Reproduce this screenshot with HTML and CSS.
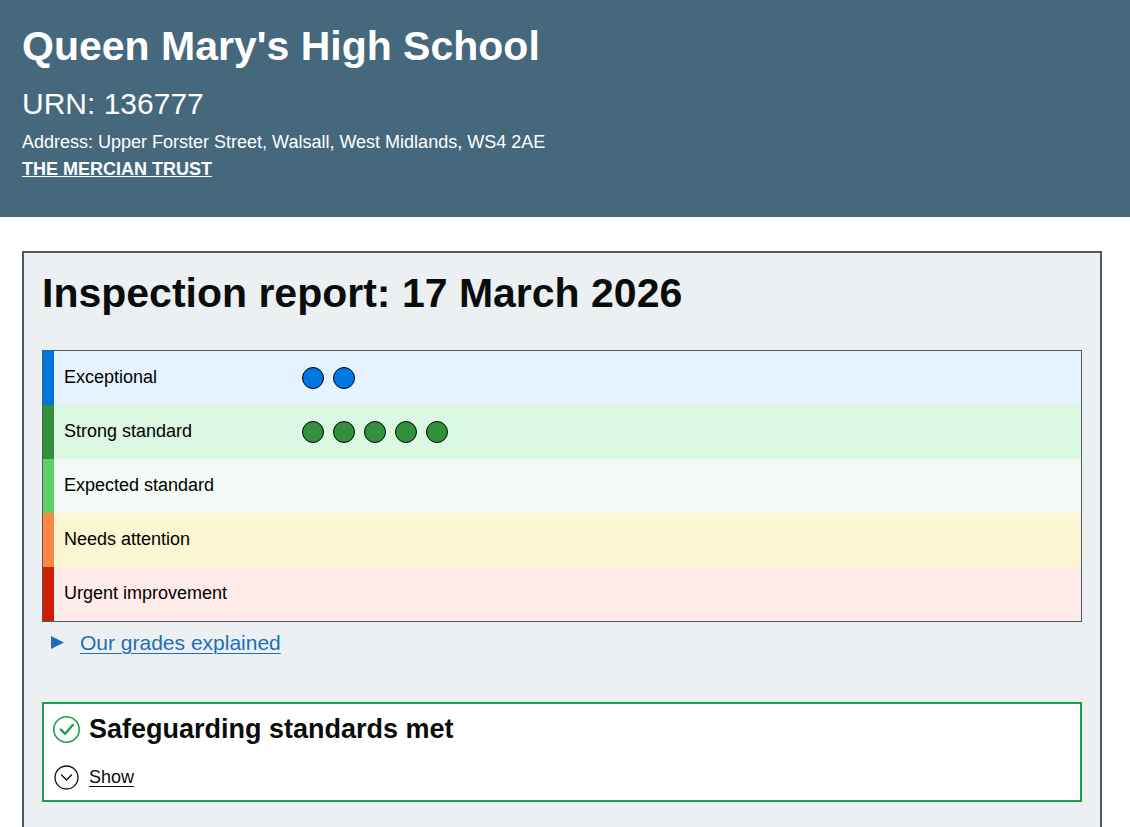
FILE: index.html
```html
<!DOCTYPE html>
<html lang="en">
<head>
    <meta charset="utf-8">
    <title>Queen Mary's High School</title>
    <link rel="stylesheet" href="styles.css">
</head>
<body>
    <header class="provider">
        <h1>Queen Mary's High School</h1>
        <p class="urn">URN: 136777</p>
        <p class="address">Address: Upper Forster Street, Walsall, West Midlands, WS4 2AE</p>
        <a class="trust" href="#trust">THE MERCIAN TRUST</a>
    </header>

    <main class="report">
        <h2>Inspection report: 17 March 2026</h2>

        <ul class="grades">
            <li class="grade exceptional">
                <span class="grade-name">Exceptional</span>
                <span class="dots"><i class="dot"></i><i class="dot"></i></span>
            </li>
            <li class="grade strong">
                <span class="grade-name">Strong standard</span>
                <span class="dots"><i class="dot"></i><i class="dot"></i><i class="dot"></i><i class="dot"></i><i class="dot"></i></span>
            </li>
            <li class="grade expected"><span class="grade-name">Expected standard</span></li>
            <li class="grade attention"><span class="grade-name">Needs attention</span></li>
            <li class="grade urgent"><span class="grade-name">Urgent improvement</span></li>
        </ul>

        <details class="explained">
            <summary>
                <svg class="arrow" viewBox="0 0 13 14" aria-hidden="true"><path d="M0 0L13 6.5L0 13Z"/></svg>
                <span>Our grades explained</span>
            </summary>
            <p>Each area is given one of five grades.</p>
        </details>

        <section class="safeguarding">
            <div class="safeguarding-title">
                <svg class="icon tick" viewBox="0 0 28 28" aria-hidden="true">
                    <circle cx="14.5" cy="14.5" r="12.7"/>
                    <path class="tick-mark" d="M8.8 14.6L13.2 18.8L20.8 10"/>
                </svg>
                <h3>Safeguarding standards met</h3>
            </div>
            <button class="toggle" type="button">
                <svg class="icon" viewBox="0 0 28 28" aria-hidden="true">
                    <circle cx="14.5" cy="14.5" r="11.5"/>
                    <path d="M9.5 12L14.5 17L19.5 12"/>
                </svg>
                <span>Show</span>
            </button>
        </section>
    </main>
</body>
</html>
```

FILE: styles.css
```css
* {
    margin: 0;
    padding: 0;
    box-sizing: border-box;
}

body {
    font-family: "Liberation Sans", Arial, sans-serif;
    font-size: 18px;
    line-height: 27px;
    color: #0b0c0c;
    background: #fff;
}

.provider {
    background: #45687d;
    color: #fff;
    padding: 21px 22px 34px;
}

h1,
h2 {
    font-size: 41px;
    line-height: 50px;
}

.urn {
    font-size: 30px;
    line-height: 38px;
    margin: 14px 0 6px;
}

.trust {
    color: #fff;
    font-weight: bold;
    text-decoration-thickness: 1px;
}

.report {
    margin: 34px 28px 0 22px;
    padding: 15px 18px 40px;
    background: #ecf0f3;
    border: 2px solid #505a5f;
}

.grades {
    list-style: none;
    margin-top: 32px;
    border: 1px solid #505a5f;
    color: #000;
}

.grade {
    display: flex;
    align-items: center;
    height: 54px;
    padding-left: 10px;
    border-left: 11px solid;
}

.grade-name {
    width: 238px;
    padding-bottom: 2px;
}

.dots {
    display: flex;
    gap: 9px;
}

.dot {
    width: 22px;
    height: 22px;
    border: 1px solid #000;
    border-radius: 50%;
}

.exceptional {
    background: #e5f2ff;
    border-color: #0076e3;
}

.exceptional .dot {
    background: #0076e3;
}

.strong {
    background: #dbf8e2;
    border-color: #328f3b;
}

.strong .dot {
    background: #328f3b;
}

.expected {
    background: #f4faf6;
    border-color: #5dd167;
}

.attention {
    background: #fdf6d2;
    border-color: #ff8744;
}

.urgent {
    background: #ffecea;
    border-color: #cf1d00;
}

.explained {
    margin-top: 6px;
    font-size: 21px;
    line-height: 30px;
}

.explained summary {
    display: flex;
    align-items: center;
    gap: 16px;
    padding-left: 9px;
    color: #1d70b8;
    list-style: none;
    cursor: pointer;
}

.explained summary span,
.toggle span {
    text-decoration: underline;
    text-decoration-thickness: 1px;
    text-underline-offset: 3px;
}

.arrow {
    width: 13px;
    height: 14px;
    fill: #1d70b8;
}

.safeguarding {
    margin-top: 44px;
    padding: 9px 8px;
    background: #fff;
    border: 2px solid #1a9f4b;
}

.safeguarding-title {
    display: flex;
    align-items: center;
    gap: 9px;
}

h3 {
    font-size: 27px;
    line-height: 32px;
}

.icon {
    width: 28px;
    height: 28px;
    fill: none;
    stroke: #0b0c0c;
    stroke-width: 1.3;
    stroke-linecap: round;
    stroke-linejoin: round;
}

.tick {
    stroke: #1a9f4b;
    stroke-width: 1.6;
}

.tick-mark {
    stroke-width: 2.4;
}

.toggle {
    display: flex;
    align-items: center;
    gap: 9px;
    margin-top: 18px;
    border: 0;
    background: none;
    color: inherit;
    font: inherit;
    cursor: pointer;
}
```
